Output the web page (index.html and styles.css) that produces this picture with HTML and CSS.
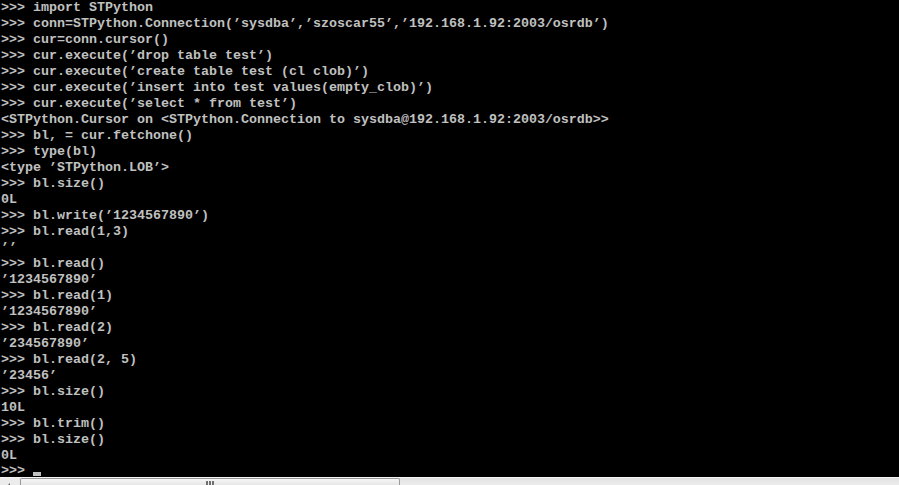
FILE: index.html
```html
<!DOCTYPE html>
<html>
<head>
<meta charset="utf-8">
<link rel="stylesheet" href="styles.css">
</head>
<body>
<div class="console">
<div class="screen">
<pre class="output">&gt;&gt;&gt; import STPython
&gt;&gt;&gt; conn=STPython.Connection(’sysdba’,’szoscar55’,’192.168.1.92:2003/osrdb’)
&gt;&gt;&gt; cur=conn.cursor()
&gt;&gt;&gt; cur.execute(’drop table test’)
&gt;&gt;&gt; cur.execute(’create table test (cl clob)’)
&gt;&gt;&gt; cur.execute(’insert into test values(empty_clob)’)
&gt;&gt;&gt; cur.execute(’select * from test’)
&lt;STPython.Cursor on &lt;STPython.Connection to sysdba@192.168.1.92:2003/osrdb&gt;&gt;
&gt;&gt;&gt; bl, = cur.fetchone()
&gt;&gt;&gt; type(bl)
&lt;type ’STPython.LOB’&gt;
&gt;&gt;&gt; bl.size()
0L
&gt;&gt;&gt; bl.write(’1234567890’)
&gt;&gt;&gt; bl.read(1,3)
’’
&gt;&gt;&gt; bl.read()
’1234567890’
&gt;&gt;&gt; bl.read(1)
’1234567890’
&gt;&gt;&gt; bl.read(2)
’234567890’
&gt;&gt;&gt; bl.read(2, 5)
’23456’
&gt;&gt;&gt; bl.size()
10L
&gt;&gt;&gt; bl.trim()
&gt;&gt;&gt; bl.size()
0L</pre>
<pre class="output prompt">&gt;&gt;&gt; <span class="cursor"></span></pre>
</div>
<div class="hscroll">
<div class="arrow-btn"><span class="arrow"></span></div>
<div class="thumb"><span class="grip"></span><span class="grip"></span><span class="grip"></span></div>
<div class="track"></div>
</div>
</div>
</body>
</html>
```
FILE: styles.css
```css
html, body {
  margin: 0;
  padding: 0;
  background: #000;
  overflow: hidden;
}
.console {
  width: 899px;
  height: 485px;
  display: flex;
  flex-direction: column;
  background: #000;
}
.screen {
  height: 477px;
  display: flex;
  flex-direction: column;
}
.output {
  margin: 0;
  padding: 0 0 0 1px;
  font-family: "Liberation Mono", "DejaVu Sans Mono", monospace;
  font-weight: bold;
  font-size: 13.333px;
  line-height: 16px;
  color: #c0c0c0;
  white-space: pre;
}
.prompt {
  line-height: 13px;
  height: 13px;
}
.cursor {
  display: inline-block;
  width: 8px;
  height: 4px;
  background: #c0c0c0;
  vertical-align: -2px;
}
.hscroll {
  height: 8px;
  display: flex;
  border-top: 1px solid #f4f4f4;
  background: #e8e8e8;
}
.arrow-btn {
  width: 19px;
  position: relative;
  background: #ececec;
}
.arrow {
  position: absolute;
  left: 7px;
  top: 5px;
  width: 0;
  height: 0;
  border-right: 3px solid #606060;
  border-top: 3px solid transparent;
  border-bottom: 3px solid transparent;
}
.thumb {
  width: 380px;
  box-sizing: border-box;
  border: 1px solid #9a9a9a;
  border-bottom: none;
  border-radius: 2px 2px 0 0;
  background: linear-gradient(#f6f6f6, #e6e6e6);
  display: flex;
  justify-content: center;
  align-items: flex-end;
  gap: 1px;
  margin-left: 1px;
}
.grip {
  width: 2px;
  height: 4px;
  background: #707070;
}
.track {
  flex: 1;
  background: linear-gradient(#e2e2e2, #ececec);
}
```
